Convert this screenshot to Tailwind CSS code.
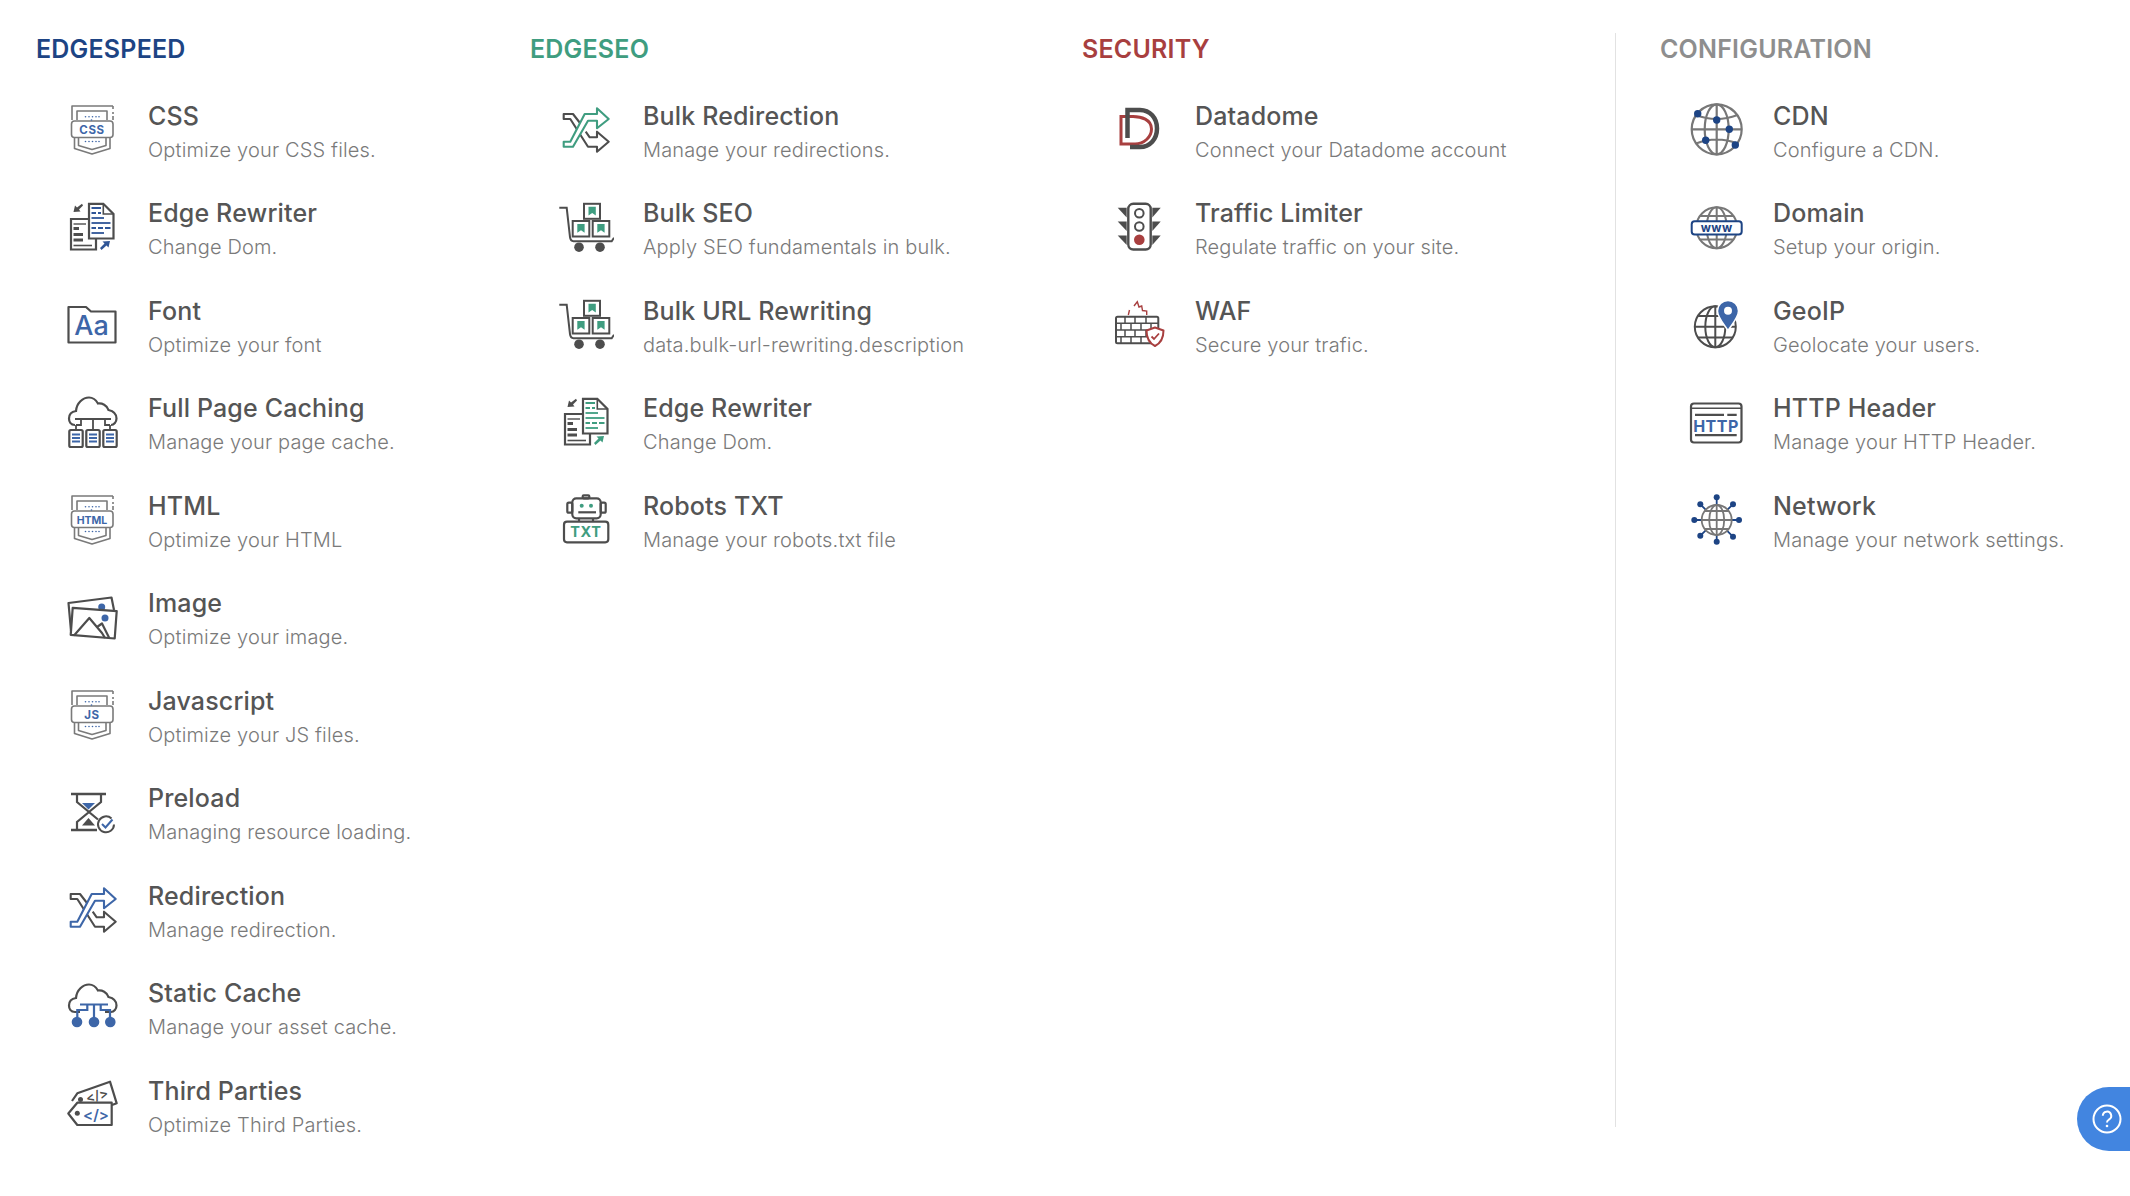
<!DOCTYPE html>
<html lang="en">
<head>
  <meta charset="UTF-8" />
  <title>Settings</title>
  <script src="https://cdn.jsdelivr.net/npm/@tailwindcss/browser@4"></script>
</head>
<body class="bg-white font-[Inter,sans-serif] min-h-screen overflow-hidden">

  <!-- shared icons: accent colour comes from currentColor -->
  <svg class="absolute w-0 h-0" aria-hidden="true">
    <symbol id="shield" viewBox="0 0 56 56">
      <g fill="none" stroke="#7a7a7a" stroke-width="1.6" stroke-linejoin="round">
        <path d="M8 19V5H49" /><path d="M49 5V8M49 11V13M49 15V19" />
        <path d="M13 19V10H43V19" />
        <rect x="7.5" y="20" width="41.5" height="16.5" rx="3" />
        <path d="M10.5 36.5V47.5L28 53L46 47.5V36.5" />
        <path d="M14.5 36.5V44.5L28 48.5L42 44.5V36.5" />
      </g>
      <g fill="currentColor">
        <circle cx="21.5" cy="15.7" r=".8" /><circle cx="25" cy="15.7" r=".8" /><circle cx="28.5" cy="15.7" r=".8" /><circle cx="32" cy="15.7" r=".8" /><circle cx="35" cy="15.7" r=".8" />
        <circle cx="27.5" cy="19" r=".8" />
        <circle cx="21.5" cy="40.5" r=".8" /><circle cx="25" cy="40.5" r=".8" /><circle cx="28.5" cy="40.5" r=".8" /><circle cx="32" cy="40.5" r=".8" /><circle cx="35" cy="40.5" r=".8" />
      </g>
    </symbol>
    <symbol id="redirect" viewBox="0 0 56 56">
      <path d="M23 22L16 13H6.7V18H13.3L31 45.7H40V50.7L51.7 40.7L40 30.7V36.3H32.7L28.7 30.7" fill="none" stroke="#4d4d4d" stroke-width="2.1" stroke-linejoin="round" />
      <path d="M6.7 40.7V45.7H16L31 19.7H40V27.3L51.7 18L40 7.3V13H27.7L13.3 40.7Z" fill="#fff" stroke="currentColor" stroke-width="2.1" stroke-linejoin="round" />
    </symbol>
    <symbol id="rewriter" viewBox="0 0 56 56">
      <path d="M24 20H7V50.5H32V40" fill="none" stroke="#4d4d4d" stroke-width="2.2" />
      <path d="M25 4.8H39.3L49.5 15V39.5H25Z" fill="#fff" stroke="#4d4d4d" stroke-width="2.2" />
      <path d="M39.3 5V15H49.5" fill="none" stroke="#4d4d4d" stroke-width="1.6" />
      <g stroke="currentColor" stroke-width="1.8">
        <path d="M27.5 9H37M27.5 14H32M34 14H37" /><path d="M27.5 19H40" /><path d="M27.5 24H46.5" /><path d="M27.5 29H32M34 29H39M41 29H46.5" /><path d="M27.5 34H40" />
      </g>
      <g stroke="#4d4d4d">
        <path d="M9.5 25H22" stroke-width="1.4" /><path d="M9.5 29.5H15" stroke-width="3" /><path d="M9.5 35.5H19" stroke-width="3" /><path d="M9.5 41H19" stroke-width="3" /><path d="M9.5 46.5H28" stroke-width="1.6" />
      </g>
      <path d="M9.5 13L11 6.5L13 8.5L18 4.8L19 6.5L15 10.5L16.5 12.5Z" fill="#4d4d4d" />
      <path d="M46 42L44.5 48.5L42.5 46.5L37.5 51L36 49L40.5 44.5L38.5 42.5Z" fill="currentColor" />
    </symbol>
    <symbol id="cart" viewBox="0 0 56 56">
      <path d="M1.3 8.8H8.7L12 38.2Q12.5 42.2 15.5 42.2H53.7L56 38.8" fill="none" stroke="#4d4d4d" stroke-width="2" />
      <circle cx="21" cy="48.2" r="4.8" fill="#4d4d4d" /><circle cx="42" cy="48.2" r="4.8" fill="#4d4d4d" />
      <g fill="none" stroke="#4d4d4d" stroke-width="2">
        <rect x="26" y="4.8" width="16" height="15" /><rect x="14.7" y="22" width="16.6" height="15.5" /><rect x="34.7" y="22" width="16.6" height="15.5" />
      </g>
      <g fill="currentColor">
        <path d="M30.5 7.8H37.8V16.5L34.2 14L30.5 16.5Z" /><path d="M19.3 25H26.6V33.7L23 31.2L19.3 33.7Z" /><path d="M39.3 25H46.6V33.7L43 31.2L39.3 33.7Z" />
      </g>
    </symbol>
  </svg>

  <main class="flex h-[1196px] pl-[36px] pt-[33px]">

    <section class="w-[494px] shrink-0">
      <h2 class="h-[30px] mb-[17.25px] text-[25px] leading-[32px] font-semibold tracking-[0.2px] text-[#1d4484]">EDGESPEED</h2>
      <ul>
        <li class="flex items-center h-[97.5px]">
          <svg class="ml-[28px] w-[56px] h-[56px] shrink-0 overflow-visible text-[#3d66a8]" viewBox="0 0 56 56"><use href="#shield" width="56" height="56" /><text x="28" y="32.500" text-anchor="middle" font-size="11.500" font-weight="700" letter-spacing=".6" fill="currentColor">CSS</text></svg>
          <div class="ml-[28px] pt-[8px]"><h3 class="text-[25px] leading-[34px] font-medium tracking-[0.15px] text-[#555]">CSS</h3><p class="text-[20px] leading-[35px] font-light tracking-[0.15px] text-[#7a7a7a]">Optimize your CSS files.</p></div>
        </li>
        <li class="flex items-center h-[97.5px]">
          <svg class="ml-[28px] w-[56px] h-[56px] shrink-0 overflow-visible text-[#2f5597]" viewBox="0 0 56 56"><use href="#rewriter" width="56" height="56" /></svg>
          <div class="ml-[28px] pt-[8px]"><h3 class="text-[25px] leading-[34px] font-medium tracking-[0.15px] text-[#555]">Edge Rewriter</h3><p class="text-[20px] leading-[35px] font-light tracking-[0.15px] text-[#7a7a7a]">Change Dom.</p></div>
        </li>
        <li class="flex items-center h-[97.5px]">
          <svg class="ml-[28px] w-[56px] h-[56px] shrink-0 overflow-visible" viewBox="0 0 56 56"><path d="M4.5 11H22L27 15.5H51.5V46.5H4.5Z" fill="none" stroke="#4d4d4d" stroke-width="2.2" stroke-linejoin="round" /><text x="27.5" y="39" text-anchor="middle" font-size="27" font-weight="500" fill="#3d66a8">Aa</text></svg>
          <div class="ml-[28px] pt-[8px]"><h3 class="text-[25px] leading-[34px] font-medium tracking-[0.15px] text-[#555]">Font</h3><p class="text-[20px] leading-[35px] font-light tracking-[0.15px] text-[#7a7a7a]">Optimize your font</p></div>
        </li>
        <li class="flex items-center h-[97.5px]">
          <svg class="ml-[28px] w-[56px] h-[56px] shrink-0 overflow-visible" viewBox="0 0 56 56">
            <path d="M11 31C6.5 31 5 27.5 5 24.5C5 20 8 17.5 12 17C12.5 9 19 3.5 25 3.5C29 3.5 32 6 34 9.5C38 9 43 11 44.5 16C49 17 52.5 20 52.5 24.5C52.5 28 50 31 47 31" fill="none" stroke="#4d4d4d" stroke-width="2.200" />
            <path d="M12 31H17V25H41V31H46M29 25V36M12 31V36M46 31V36M17 25H11M41 25H47" fill="none" stroke="#4d4d4d" stroke-width="1.800" />
            <g fill="none" stroke="#4d4d4d" stroke-width="2.200"><rect x="5.300" y="36" width="13.400" height="17" rx="1.500" /><rect x="22.300" y="36" width="13.400" height="17" rx="1.500" /><rect x="39.300" y="36" width="13.400" height="17" rx="1.500" /></g>
            <path d="M8 40.500H16M8 44H16M8 47.500H16M25 40.500H33M25 44H33M25 47.500H33M42 40.500H50M42 44H50M42 47.500H50" stroke="#3d66a8" stroke-width="1.800" />
          </svg>
          <div class="ml-[28px] pt-[8px]"><h3 class="text-[25px] leading-[34px] font-medium tracking-[0.15px] text-[#555]">Full Page Caching</h3><p class="text-[20px] leading-[35px] font-light tracking-[0.15px] text-[#7a7a7a]">Manage your page cache.</p></div>
        </li>
        <li class="flex items-center h-[97.5px]">
          <svg class="ml-[28px] w-[56px] h-[56px] shrink-0 overflow-visible text-[#3d66a8]" viewBox="0 0 56 56"><use href="#shield" width="56" height="56" /><text x="28" y="32.500" text-anchor="middle" font-size="10.500" font-weight="700" fill="currentColor">HTML</text></svg>
          <div class="ml-[28px] pt-[8px]"><h3 class="text-[25px] leading-[34px] font-medium tracking-[0.15px] text-[#555]">HTML</h3><p class="text-[20px] leading-[35px] font-light tracking-[0.15px] text-[#7a7a7a]">Optimize your HTML</p></div>
        </li>
        <li class="flex items-center h-[97.5px]">
          <svg class="ml-[28px] w-[56px] h-[56px] shrink-0 overflow-visible" viewBox="0 0 56 56">
            <circle cx="37.700" cy="18" r="3.500" fill="#3d66a8" />
            <path d="M7 42L4.500 14L47.500 8.500L50 21" fill="none" stroke="#4d4d4d" stroke-width="2.200" stroke-linejoin="round" />
            <path d="M8.700 18.800L52.700 22.200L50.700 49.500L6.700 45.800Z" fill="none" stroke="#4d4d4d" stroke-width="2.200" stroke-linejoin="round" />
            <circle cx="41" cy="29" r="3.500" fill="#3d66a8" />
            <path d="M10 46.500L25.300 29L38 44L41 49M33 38L38 34.500L45 48.500" fill="none" stroke="#4d4d4d" stroke-width="2.200" stroke-linejoin="round" />
          </svg>
          <div class="ml-[28px] pt-[8px]"><h3 class="text-[25px] leading-[34px] font-medium tracking-[0.15px] text-[#555]">Image</h3><p class="text-[20px] leading-[35px] font-light tracking-[0.15px] text-[#7a7a7a]">Optimize your image.</p></div>
        </li>
        <li class="flex items-center h-[97.5px]">
          <svg class="ml-[28px] w-[56px] h-[56px] shrink-0 overflow-visible text-[#3d66a8]" viewBox="0 0 56 56"><use href="#shield" width="56" height="56" /><text x="28" y="32.500" text-anchor="middle" font-size="11.500" font-weight="700" letter-spacing=".6" fill="currentColor">JS</text></svg>
          <div class="ml-[28px] pt-[8px]"><h3 class="text-[25px] leading-[34px] font-medium tracking-[0.15px] text-[#555]">Javascript</h3><p class="text-[20px] leading-[35px] font-light tracking-[0.15px] text-[#7a7a7a]">Optimize your JS files.</p></div>
        </li>
        <li class="flex items-center h-[97.5px]">
          <svg class="ml-[28px] w-[56px] h-[56px] shrink-0 overflow-visible" viewBox="0 0 56 56">
            <path d="M7 10H42M7 46H33" stroke="#4d4d4d" stroke-width="2.400" />
            <path d="M13 10V18L25 28L13 38V46M37 10V18L25 28L34 35.500" fill="none" stroke="#4d4d4d" stroke-width="2.200" />
            <path d="M18 19H31L24.500 25.500Z" fill="#3d66a8" />
            <path d="M24.500 34L31 41.500H18Z" fill="#4d4d4d" />
            <path d="M47.500 34.500A8 8 0 1 0 50 40.500" fill="none" stroke="#4d4d4d" stroke-width="2" />
            <path d="M38 40L41.500 43.500L48.500 35.500" fill="none" stroke="#3d66a8" stroke-width="2" />
          </svg>
          <div class="ml-[28px] pt-[8px]"><h3 class="text-[25px] leading-[34px] font-medium tracking-[0.15px] text-[#555]">Preload</h3><p class="text-[20px] leading-[35px] font-light tracking-[0.15px] text-[#7a7a7a]">Managing resource loading.</p></div>
        </li>
        <li class="flex items-center h-[97.5px]">
          <svg class="ml-[28px] w-[56px] h-[56px] shrink-0 overflow-visible text-[#3d66a8]" viewBox="0 0 56 56"><use href="#redirect" width="56" height="56" /></svg>
          <div class="ml-[28px] pt-[8px]"><h3 class="text-[25px] leading-[34px] font-medium tracking-[0.15px] text-[#555]">Redirection</h3><p class="text-[20px] leading-[35px] font-light tracking-[0.15px] text-[#7a7a7a]">Manage redirection.</p></div>
        </li>
        <li class="flex items-center h-[97.5px]">
          <svg class="ml-[28px] w-[56px] h-[56px] shrink-0 overflow-visible" viewBox="0 0 56 56">
            <path d="M16 33H11C6.500 33 5 29.500 5 26.500C5 22 8 19.500 12 19C12.500 11 19 5.500 25 5.500C29 5.500 32 8 34 11.500C38 11 43 13 44.500 18C49 19 52.500 22 52.500 26.500C52.500 30 50 33 47 33H41" fill="none" stroke="#4d4d4d" stroke-width="2.200" />
            <path d="M16 25.500H44M23.300 25.500V31H13.300V38M30 25.500V38M36.700 25.500V31H46V38" fill="none" stroke="#3d66a8" stroke-width="2.200" />
            <circle cx="13" cy="43" r="5.300" fill="#3d66a8" /><circle cx="30" cy="43" r="5.300" fill="#3d66a8" /><circle cx="46.300" cy="43" r="5.300" fill="#3d66a8" />
          </svg>
          <div class="ml-[28px] pt-[8px]"><h3 class="text-[25px] leading-[34px] font-medium tracking-[0.15px] text-[#555]">Static Cache</h3><p class="text-[20px] leading-[35px] font-light tracking-[0.15px] text-[#7a7a7a]">Manage your asset cache.</p></div>
        </li>
        <li class="flex items-center h-[97.5px]">
          <svg class="ml-[28px] w-[56px] h-[56px] shrink-0 overflow-visible" viewBox="0 0 56 56">
            <path d="M8 25L13.300 17.300L46 5.700L52.700 27.300L48 29" fill="none" stroke="#4d4d4d" stroke-width="2.200" stroke-linejoin="round" />
            <circle cx="16.500" cy="23.500" r="2.500" fill="#4d4d4d" />
            <text x="33" y="24" text-anchor="middle" font-size="13" font-weight="600" fill="#4d4d4d" transform="rotate(-15 33 20)">&lt;/&gt;</text>
            <path d="M4.300 37.500L13.300 26.700H47.700V49H13.300Z" fill="#fff" stroke="#4d4d4d" stroke-width="2.200" stroke-linejoin="round" />
            <circle cx="13.300" cy="37.300" r="2.500" fill="#4d4d4d" />
            <text x="32" y="43.500" text-anchor="middle" font-size="15" font-weight="600" fill="#3d66a8">&lt;/&gt;</text>
          </svg>
          <div class="ml-[28px] pt-[8px]"><h3 class="text-[25px] leading-[34px] font-medium tracking-[0.15px] text-[#555]">Third Parties</h3><p class="text-[20px] leading-[35px] font-light tracking-[0.15px] text-[#7a7a7a]">Optimize Third Parties.</p></div>
        </li>
      </ul>
    </section>

    <section class="w-[552px] shrink-0">
      <h2 class="h-[30px] mb-[17.25px] text-[25px] leading-[32px] font-semibold tracking-[0.2px] text-[#3f9d80]">EDGESEO</h2>
      <ul>
        <li class="flex items-center h-[97.5px]">
          <svg class="ml-[28px] w-[56px] h-[56px] shrink-0 overflow-visible text-[#3f9d80]" viewBox="0 0 56 56"><use href="#redirect" x="-1" width="56" height="56" /></svg>
          <div class="ml-[29px] pt-[8px]"><h3 class="text-[25px] leading-[34px] font-medium tracking-[0.15px] text-[#555]">Bulk Redirection</h3><p class="text-[20px] leading-[35px] font-light tracking-[0.15px] text-[#7a7a7a]">Manage your redirections.</p></div>
        </li>
        <li class="flex items-center h-[97.5px]">
          <svg class="ml-[28px] w-[56px] h-[56px] shrink-0 overflow-visible text-[#3f9d80]" viewBox="0 0 56 56"><use href="#cart" width="56" height="56" /></svg>
          <div class="ml-[29px] pt-[8px]"><h3 class="text-[25px] leading-[34px] font-medium tracking-[0.15px] text-[#555]">Bulk SEO</h3><p class="text-[20px] leading-[35px] font-light tracking-[0.15px] text-[#7a7a7a]">Apply SEO fundamentals in bulk.</p></div>
        </li>
        <li class="flex items-center h-[97.5px]">
          <svg class="ml-[28px] w-[56px] h-[56px] shrink-0 overflow-visible text-[#3f9d80]" viewBox="0 0 56 56"><use href="#cart" width="56" height="56" /></svg>
          <div class="ml-[29px] pt-[8px]"><h3 class="text-[25px] leading-[34px] font-medium tracking-[0.15px] text-[#555]">Bulk URL Rewriting</h3><p class="text-[20px] leading-[35px] font-light tracking-[0.15px] text-[#7a7a7a]">data.bulk-url-rewriting.description</p></div>
        </li>
        <li class="flex items-center h-[97.5px]">
          <svg class="ml-[28px] w-[56px] h-[56px] shrink-0 overflow-visible text-[#3f9d80]" viewBox="0 0 56 56"><use href="#rewriter" width="56" height="56" /></svg>
          <div class="ml-[29px] pt-[8px]"><h3 class="text-[25px] leading-[34px] font-medium tracking-[0.15px] text-[#555]">Edge Rewriter</h3><p class="text-[20px] leading-[35px] font-light tracking-[0.15px] text-[#7a7a7a]">Change Dom.</p></div>
        </li>
        <li class="flex items-center h-[97.5px]">
          <svg class="ml-[28px] w-[56px] h-[56px] shrink-0 overflow-visible" viewBox="0 0 56 56">
            <g fill="none" stroke="#4d4d4d" stroke-width="2.200">
              <rect x="14.300" y="7.300" width="28.400" height="20" rx="4" />
              <rect x="9.300" y="11.700" width="5" height="10" rx="1.500" /><rect x="42.700" y="11.700" width="5" height="10" rx="1.500" />
              <rect x="24.700" y="4.300" width="6.600" height="3" rx="1" />
              <path d="M21 27.300V30.700M35 27.300V30.700" />
              <rect x="6" y="30.700" width="44.300" height="20.600" rx="3" />
              <path d="M20.300 21.300H38" />
            </g>
            <circle cx="23.700" cy="14.700" r="2" fill="#3f9d80" /><circle cx="33" cy="14.700" r="2" fill="#3f9d80" />
            <text x="28" y="46" text-anchor="middle" font-size="14.500" font-weight="700" letter-spacing=".6" fill="#3f9d80">TXT</text>
          </svg>
          <div class="ml-[29px] pt-[8px]"><h3 class="text-[25px] leading-[34px] font-medium tracking-[0.15px] text-[#555]">Robots TXT</h3><p class="text-[20px] leading-[35px] font-light tracking-[0.15px] text-[#7a7a7a]">Manage your robots.txt file</p></div>
        </li>
      </ul>
    </section>

    <section class="w-[534px] shrink-0 h-[1094px] border-r border-[#e2e2e2]">
      <h2 class="h-[30px] mb-[17.25px] text-[25px] leading-[32px] font-semibold tracking-[0.2px] text-[#a83f3f]">SECURITY</h2>
      <ul>
        <li class="flex items-center h-[97.5px]">
          <svg class="ml-[28px] w-[56px] h-[56px] shrink-0 overflow-visible" viewBox="0 0 56 56">
            <path d="M11 15.500H23C31 15.500 41.500 18.500 41.500 28C41.500 36 34 43 25 43H11Z" fill="none" stroke="#a83f3f" stroke-width="3" />
            <path d="M17.500 37V9H30C40 9 47 17 47 27.500C47 38 40 46 30 46H20" fill="none" stroke="#4d4d4d" stroke-width="4.500" />
          </svg>
          <div class="ml-[29px] pt-[8px]"><h3 class="text-[25px] leading-[34px] font-medium tracking-[0.15px] text-[#555]">Datadome</h3><p class="text-[20px] leading-[35px] font-light tracking-[0.15px] text-[#7a7a7a]">Connect your Datadome account</p></div>
        </li>
        <li class="flex items-center h-[97.5px]">
          <svg class="ml-[28px] w-[56px] h-[56px] shrink-0 overflow-visible" viewBox="0 0 56 56">
            <rect x="18.300" y="4.800" width="22.400" height="45.700" rx="5" fill="none" stroke="#4d4d4d" stroke-width="2.400" />
            <circle cx="29.300" cy="14.200" r="4.300" fill="none" stroke="#4d4d4d" stroke-width="2" />
            <circle cx="29.300" cy="27.500" r="4.300" fill="none" stroke="#4d4d4d" stroke-width="2" />
            <circle cx="29.300" cy="40.800" r="5.300" fill="#a83f3f" />
            <g fill="#4d4d4d">
              <path d="M7.700 8.800H16.700V18.500Z" /><path d="M7.700 22.500H16.700V32Z" /><path d="M7.700 36.500H16.700V46Z" />
              <path d="M50.700 8.800H42.300V18.500Z" /><path d="M50.700 22.500H42.300V32Z" /><path d="M50.700 36.500H42.300V46Z" />
            </g>
          </svg>
          <div class="ml-[29px] pt-[8px]"><h3 class="text-[25px] leading-[34px] font-medium tracking-[0.15px] text-[#555]">Traffic Limiter</h3><p class="text-[20px] leading-[35px] font-light tracking-[0.15px] text-[#7a7a7a]">Regulate traffic on your site.</p></div>
        </li>
        <li class="flex items-center h-[97.5px]">
          <svg class="ml-[28px] w-[56px] h-[56px] shrink-0 overflow-visible" viewBox="0 0 56 56">
            <rect x="6" y="20.700" width="42.300" height="26.600" rx="1.500" fill="none" stroke="#4d4d4d" stroke-width="2" />
            <path d="M6 27.300H48M6 34H48M6 40.700H48M15 20.700V27.300M25 20.700V27.300M36 20.700V27.300M11 27.300V34M21 27.300V34M31 27.300V34M41 27.300V34M15 34V40.700M25 34V40.700M36 34V40.700M11 40.700V47.300M21 40.700V47.300M31 40.700V47.300" stroke="#4d4d4d" stroke-width="1.500" />
            <path d="M18.300 19L19.500 14M24 10L27.300 5.700L29 11L31.700 10L32.500 14.500L36.700 15L36.700 19" fill="none" stroke="#a83f3f" stroke-width="1.400" />
            <path d="M45 31.500L53.500 34.500C53.500 42 51 47 45 50C39 47 36.500 42 36.500 34.500Z" fill="#fff" stroke="#a83f3f" stroke-width="2" stroke-linejoin="round" />
            <path d="M41.500 40.500L44 43L49 37.500" fill="none" stroke="#a83f3f" stroke-width="1.800" />
          </svg>
          <div class="ml-[29px] pt-[8px]"><h3 class="text-[25px] leading-[34px] font-medium tracking-[0.15px] text-[#555]">WAF</h3><p class="text-[20px] leading-[35px] font-light tracking-[0.15px] text-[#7a7a7a]">Secure your trafic.</p></div>
        </li>
      </ul>
    </section>

    <section class="pl-[44px] flex-1">
      <h2 class="h-[30px] mb-[17.25px] text-[25px] leading-[32px] font-semibold tracking-[0.2px] text-[#8e8e8e]">CONFIGURATION</h2>
      <ul>
        <li class="flex items-center h-[97.5px]">
          <svg class="ml-[28px] w-[56px] h-[56px] shrink-0 overflow-visible" viewBox="0 0 56 56">
            <g fill="none" stroke="#777" stroke-width="2.200">
              <circle cx="28.700" cy="28.300" r="25" /><ellipse cx="28.700" cy="28.300" rx="12" ry="25" />
              <path d="M28.700 3.300V53.300M3.700 28.300H53.700M8 14Q28.700 22 49.500 14M8 42.500Q28.700 34.500 49.500 42.500" />
            </g>
            <g fill="#1d4484"><circle cx="9.700" cy="12.700" r="3.700" /><circle cx="28.700" cy="19" r="3.700" /><circle cx="41.300" cy="28.300" r="3.700" /><circle cx="17.700" cy="39.300" r="3.700" /><circle cx="47.300" cy="44" r="3.700" /></g>
          </svg>
          <div class="ml-[29px] pt-[8px]"><h3 class="text-[25px] leading-[34px] font-medium tracking-[0.15px] text-[#555]">CDN</h3><p class="text-[20px] leading-[35px] font-light tracking-[0.15px] text-[#7a7a7a]">Configure a CDN.</p></div>
        </li>
        <li class="flex items-center h-[97.5px]">
          <svg class="ml-[28px] w-[56px] h-[56px] shrink-0 overflow-visible" viewBox="0 0 56 56">
            <g fill="none" stroke="#777" stroke-width="2">
              <circle cx="28.700" cy="28.800" r="20.500" /><ellipse cx="28.700" cy="28.800" rx="10" ry="20.500" />
              <path d="M28.700 8.300V49.300M12 17H45M12 40.500H45" />
            </g>
            <rect x="3.700" y="22.200" width="50" height="13.300" rx="3" fill="#fff" stroke="#1d4484" stroke-width="2" />
            <text x="28.700" y="32.700" text-anchor="middle" font-size="12" font-weight="700" letter-spacing=".5" fill="#1d4484">www</text>
          </svg>
          <div class="ml-[29px] pt-[8px]"><h3 class="text-[25px] leading-[34px] font-medium tracking-[0.15px] text-[#555]">Domain</h3><p class="text-[20px] leading-[35px] font-light tracking-[0.15px] text-[#7a7a7a]">Setup your origin.</p></div>
        </li>
        <li class="flex items-center h-[97.5px]">
          <svg class="ml-[28px] w-[56px] h-[56px] shrink-0 overflow-visible" viewBox="0 0 56 56">
            <g fill="none" stroke="#4d4d4d" stroke-width="2">
              <circle cx="27.300" cy="30.700" r="20.500" /><ellipse cx="27.300" cy="30.700" rx="10" ry="20.500" />
              <path d="M27.300 10.200V51.200M6.800 30.700H47.800M10 20H45M10 41.500H45" />
            </g>
            <path d="M40 34.500C35 27 29.500 21 29.500 15A10.500 10.500 0 0 1 50.500 15C50.500 21 45 27 40 34.500Z" fill="#3d66a8" stroke="#fff" stroke-width="1.500" />
            <circle cx="40" cy="14.700" r="4" fill="#fff" />
          </svg>
          <div class="ml-[29px] pt-[8px]"><h3 class="text-[25px] leading-[34px] font-medium tracking-[0.15px] text-[#555]">GeoIP</h3><p class="text-[20px] leading-[35px] font-light tracking-[0.15px] text-[#7a7a7a]">Geolocate your users.</p></div>
        </li>
        <li class="flex items-center h-[97.5px]">
          <svg class="ml-[28px] w-[56px] h-[56px] shrink-0 overflow-visible" viewBox="0 0 56 56">
            <rect x="3" y="9.500" width="50.500" height="39" rx="3" fill="none" stroke="#4d4d4d" stroke-width="2.200" />
            <path d="M3 14.200H53.500" stroke="#4d4d4d" stroke-width="1.400" />
            <path d="M7 20.800H36M39.300 20.800H48.700M7 41.200H48.700" stroke="#4d4d4d" stroke-width="2.200" />
            <text x="28" y="37.500" text-anchor="middle" font-size="16" font-weight="700" letter-spacing=".5" fill="#3d66a8">HTTP</text>
          </svg>
          <div class="ml-[29px] pt-[8px]"><h3 class="text-[25px] leading-[34px] font-medium tracking-[0.15px] text-[#555]">HTTP Header</h3><p class="text-[20px] leading-[35px] font-light tracking-[0.15px] text-[#7a7a7a]">Manage your HTTP Header.</p></div>
        </li>
        <li class="flex items-center h-[97.5px]">
          <svg class="ml-[28px] w-[56px] h-[56px] shrink-0 overflow-visible" viewBox="0 0 56 56">
            <path d="M28.700 6.300V50.700M12.300 13.300L45 45.700M45 13.300L12.300 44.700M6.300 29H51" stroke="#1d4484" stroke-width="1.800" />
            <circle cx="28.700" cy="29" r="15" fill="#fff" />
            <g fill="none" stroke="#777" stroke-width="1.800">
              <circle cx="28.700" cy="29" r="15" /><ellipse cx="28.700" cy="29" rx="7.500" ry="15" />
              <path d="M28.700 14V44M13.700 29H43.700M17 20H40.500M17 38H40.500" />
            </g>
            <g fill="#1d4484"><circle cx="28.700" cy="6.300" r="3" /><circle cx="12.300" cy="13.300" r="3" /><circle cx="45" cy="13.300" r="3" /><circle cx="6.300" cy="29" r="3" /><circle cx="51" cy="29" r="3" /><circle cx="12.300" cy="44.700" r="3" /><circle cx="45" cy="45.700" r="3" /><circle cx="28.700" cy="50.700" r="3" /></g>
          </svg>
          <div class="ml-[29px] pt-[8px]"><h3 class="text-[25px] leading-[34px] font-medium tracking-[0.15px] text-[#555]">Network</h3><p class="text-[20px] leading-[35px] font-light tracking-[0.15px] text-[#7a7a7a]">Manage your network settings.</p></div>
        </li>
      </ul>
    </section>
  </main>

  <button class="absolute right-0 top-[1087px] w-[53px] h-[64px] pl-[15px] flex items-center rounded-l-[32px] bg-[#4285e0]" aria-label="Help">
    <svg class="w-[30px] h-[30px] shrink-0" viewBox="0 0 30 30" fill="none" stroke="#fff" stroke-width="2"><circle cx="15" cy="15" r="13.500" /><path d="M10.800 11.800A4.200 4.200 0 1 1 17 15.500C15.500 16.400 15 17 15 18.500" /><circle cx="15" cy="22" r="1.300" fill="#fff" stroke="none" /></svg>
  </button>

</body>
</html>
